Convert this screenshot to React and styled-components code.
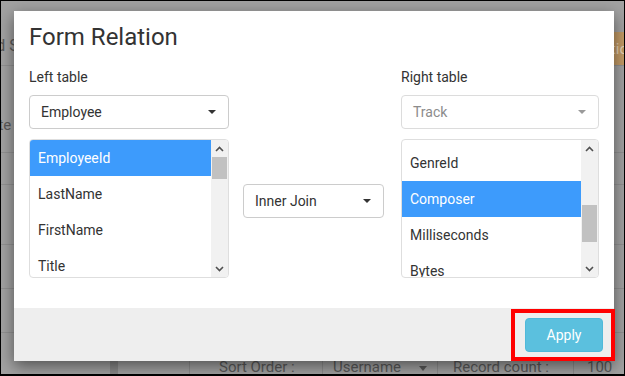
import styled, { createGlobalStyle } from 'styled-components';

const GlobalStyle = createGlobalStyle`
  html, body {
    margin: 0;
    padding: 0;
    background: #a2a2a2;
  }
  body {
    font-family: Roboto, "Liberation Sans", sans-serif;
    overflow: hidden;
  }
  * {
    box-sizing: border-box;
  }
`;

const Screen = styled.div`
  position: relative;
  width: 625px;
  height: 376px;
  overflow: hidden;
  background: #a2a2a2;

  &::after {
    content: '';
    position: absolute;
    inset: 0;
    border: 1px solid #000;
    border-bottom-width: 2px;
    pointer-events: none;
    z-index: 10;
  }
`;

// dimmed page behind the dialog
const Page = styled.div`
  display: flex;
  flex-direction: column;
  height: 100%;
  color: #5a5a5a;
  font-size: 15px;
`;

const TopBar = styled.div`
  height: 67px;
  display: flex;
  justify-content: space-between;
  align-items: flex-end;
  border-bottom: 1px solid #929292;
`;

const PageTitle = styled.div`
  font-size: 16px;
  margin: 0 0 10px -24px;
`;

const TanButton = styled.div`
  height: 33px;
  padding: 0 14px;
  margin-right: -33px;
  display: flex;
  align-items: center;
  background: #c39b66;
  color: #e6d3b6;
  font-size: 15px;
`;

const PageRow = styled.div`
  height: ${(p) => p.$h}px;
  display: flex;
  align-items: flex-end;
  border-bottom: 1px solid #929292;
`;

const RowText = styled.div`
  margin: 0 0 18px -31px;
`;

const ToolRow = styled.div`
  flex: 1;
  display: flex;
`;

const ToolCell = styled.div`
  width: ${(p) => p.$w}px;
  flex: ${(p) => (p.$w ? 'none' : 1)};
  padding: 25px 0 0 ${(p) => p.$pad || 0}px;
  border-left: 1px solid ${(p) => (p.$line ? '#8f8f8f' : 'transparent')};
  background: ${(p) => (p.$dark ? '#8a8a8a' : 'transparent')};
  display: flex;
  gap: 18px;
  white-space: nowrap;
`;

const ToolCaret = styled.span`
  width: 0;
  height: 0;
  margin-top: 8px;
  border-left: 4px solid transparent;
  border-right: 4px solid transparent;
  border-top: 5px solid #5a5a5a;
`;

// dialog
const Modal = styled.div`
  position: absolute;
  left: 14px;
  top: 11px;
  width: 600px;
  height: 350px;
  background: #fff;
  box-shadow: 0 5px 15px rgba(0, 0, 0, 0.5);
  display: flex;
  flex-direction: column;
  color: #333;
  z-index: 5;
`;

const Header = styled.div`
  padding: 13px 15px 0;
`;

const Title = styled.h4`
  margin: 0;
  font-size: 24px;
  font-weight: 400;
  line-height: 26px;
`;

const Body = styled.div`
  flex: 1;
  display: grid;
  grid-template-columns: 200px 1fr 198px;
  padding: 17px 15px 0;
`;

const Column = styled.div`
  display: flex;
  flex-direction: column;
`;

const MiddleColumn = styled.div`
  display: flex;
  align-items: flex-start;
  padding: 117px 0 0 14px;
`;

const Label = styled.label`
  font-size: 14px;
  line-height: 20px;
  margin-bottom: 8px;
`;

const SelectBox = styled.div`
  width: ${(p) => (p.$w ? `${p.$w}px` : 'auto')};
  height: 34px;
  border: 1px solid ${(p) => (p.$disabled ? '#dcdcdc' : '#ccc')};
  border-radius: 4px;
  display: flex;
  align-items: center;
  justify-content: space-between;
  padding: 0 12px 0 11px;
  font-size: 14px;
  color: ${(p) => (p.$disabled ? '#8c8c8c' : '#333')};
  background: #fff;
`;

const Caret = styled.span`
  width: 0;
  height: 0;
  border-left: 4px solid transparent;
  border-right: 4px solid transparent;
  border-top: 4px solid ${(p) => (p.$muted ? '#9a9a9a' : '#333')};
`;

const ListBox = styled.div`
  margin-top: 10px;
  height: 139px;
  border: 1px solid #dedede;
  border-radius: 4px;
  display: flex;
  overflow: hidden;
`;

const Options = styled.div`
  flex: 1;
  overflow: hidden;
`;

const OptionList = styled.div`
  margin-top: -${(p) => p.$offset || 0}px;
`;

const Option = styled.div`
  height: 36px;
  line-height: 36px;
  padding-left: 8px;
  font-size: 14px;
  color: ${(p) => (p.$selected ? '#fff' : '#333')};
  background: ${(p) => (p.$selected ? '#3d9bfc' : 'transparent')};
`;

const Scrollbar = styled.div`
  width: 17px;
  background: #f1f1f1;
  display: flex;
  flex-direction: column;
`;

const ScrollButton = styled.div`
  height: 17px;
  display: flex;
  align-items: center;
  justify-content: center;
`;

const ScrollTrack = styled.div`
  flex: 1;
  padding: 0 1px;
`;

const Thumb = styled.div`
  margin-top: ${(p) => p.$top}px;
  height: ${(p) => p.$size}px;
  background: #c1c1c1;
`;

const Footer = styled.div`
  height: 53px;
  background: #eee;
  display: flex;
  justify-content: flex-end;
  align-items: flex-start;
  padding-top: 1px;
`;

const Highlight = styled.div`
  border: 4px solid #f00;
  padding: 5px 8px 5px 10px;
  margin-right: -1px;
`;

const ApplyButton = styled.button`
  width: 78px;
  height: 34px;
  background: #5bc0de;
  border: 1px solid #4fb9d9;
  border-radius: 4px;
  color: #fff;
  font-family: Roboto, "Liberation Sans", sans-serif;
  font-size: 14px;
  padding: 0;
`;

const Chevron = ({ down }) => (
  <svg width="9" height="6" viewBox="0 0 9 6">
    <polyline
      points={down ? '1,1 4.5,4.5 8,1' : '1,5 4.5,1.5 8,5'}
      fill="none"
      stroke="#505050"
      strokeWidth="1.6"
    />
  </svg>
);

function List({ items, selected, offset, thumbTop, thumbSize }) {
  return (
    <ListBox>
      <Options>
        <OptionList $offset={offset}>
          {items.map((it) => (
            <Option key={it} $selected={it === selected}>
              {it}
            </Option>
          ))}
        </OptionList>
      </Options>
      <Scrollbar>
        <ScrollButton>
          <Chevron />
        </ScrollButton>
        <ScrollTrack>
          <Thumb $top={thumbTop} $size={thumbSize} />
        </ScrollTrack>
        <ScrollButton>
          <Chevron down />
        </ScrollButton>
      </Scrollbar>
    </ListBox>
  );
}

const employeeFields = ['EmployeeId', 'LastName', 'FirstName', 'Title', 'ReportsTo', 'BirthDate', 'HireDate', 'Address'];
const trackFields = ['TrackId', 'Name', 'AlbumId', 'MediaTypeId', 'GenreId', 'Composer', 'Milliseconds', 'Bytes', 'UnitPrice'];

export default function App() {
  return (
    <Screen>
      <GlobalStyle />
      <Page>
        <TopBar>
          <PageTitle>Grid Settings</PageTitle>
          <TanButton>Actions</TanButton>
        </TopBar>
        <PageRow $h={88}>
          <RowText>Delete User</RowText>
        </PageRow>
        <PageRow $h={32} />
        <PageRow $h={61} />
        <PageRow $h={44} />
        <PageRow $h={45} />
        <ToolRow>
          <ToolCell $w={110} />
          <ToolCell $w={8} $dark />
          <ToolCell $w={71} />
          <ToolCell $w={133} $pad={29} $line>Sort Order :</ToolCell>
          <ToolCell $w={115} $pad={10} $line>
            Username <ToolCaret />
          </ToolCell>
          <ToolCell $w={136} $pad={15} $line>Record count :</ToolCell>
          <ToolCell $pad={13} $line>100</ToolCell>
        </ToolRow>
      </Page>

      <Modal>
        <Header>
          <Title>Form Relation</Title>
        </Header>
        <Body>
          <Column>
            <Label>Left table</Label>
            <SelectBox>
              Employee <Caret />
            </SelectBox>
            <List items={employeeFields} selected="EmployeeId" offset={0} thumbTop={0} thumbSize={22} />
          </Column>
          <MiddleColumn>
            <SelectBox $w={141}>
              Inner Join <Caret />
            </SelectBox>
          </MiddleColumn>
          <Column>
            <Label>Right table</Label>
            <SelectBox $disabled>
              Track <Caret $muted />
            </SelectBox>
            <List items={trackFields} selected="Composer" offset={139} thumbTop={48} thumbSize={37} />
          </Column>
        </Body>
        <Footer>
          <Highlight>
            <ApplyButton>Apply</ApplyButton>
          </Highlight>
        </Footer>
      </Modal>
    </Screen>
  );
}
